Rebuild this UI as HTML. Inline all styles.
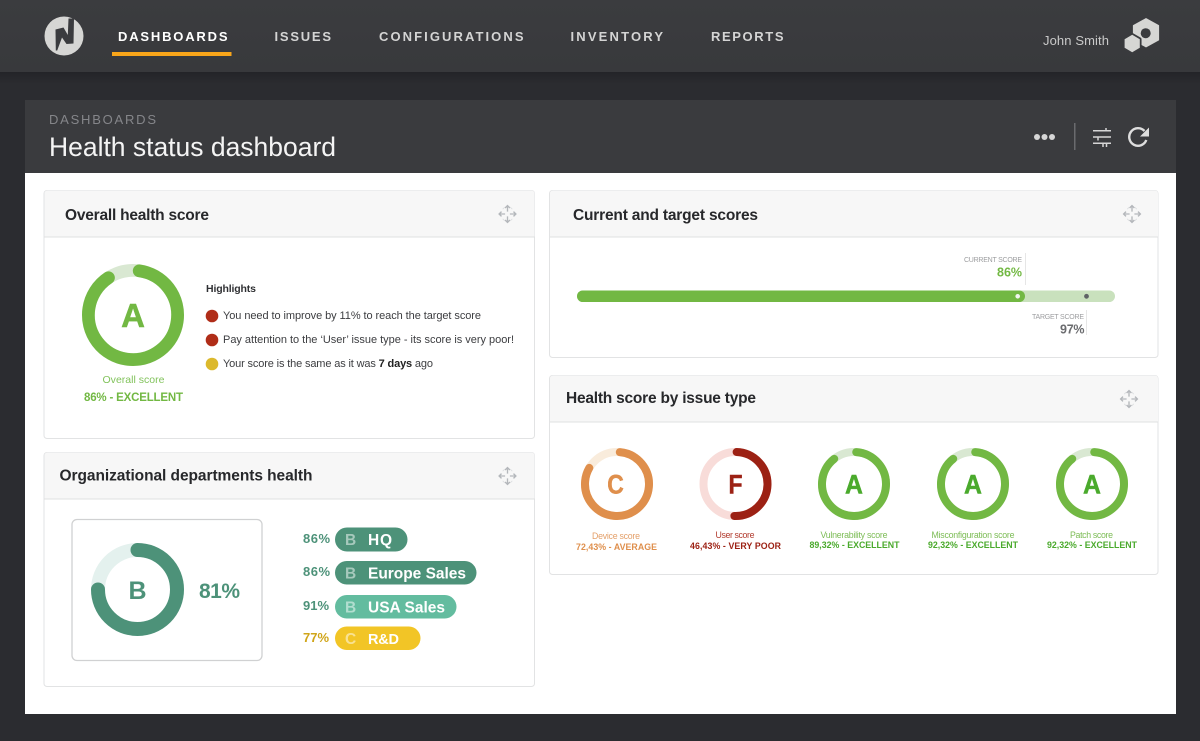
<!DOCTYPE html>
<html><head><meta charset="utf-8"><title>Health status dashboard</title>
<style>
html,body{margin:0;padding:0;background:#2b2c30;width:1200px;height:741px;overflow:hidden}
svg{display:block}
text{font-family:"Liberation Sans",sans-serif}
.nav{font-size:13px;font-weight:bold;fill:#d4d4d4}
.ct{font-size:15.5px;font-weight:bold;fill:#27282b}
.hl{font-size:11px;fill:#3c3d40}
.card{fill:#fff;stroke:#e2e3e4}
.chd{fill:#f7f7f7}
.pct{font-size:13px;font-weight:bold}
.pill{font-size:15.5px;font-weight:bold;fill:#fff}
.pl{font-size:15.5px;font-weight:bold;fill:#fff;fill-opacity:.5}
.sl{font-size:8.8px}
.sv{font-size:8.8px;font-weight:bold}
.big{font-size:27px;font-weight:bold;text-anchor:middle;stroke-width:.5px}
</style></head><body>
<svg width="1200" height="741" viewBox="0 0 1200 741" xmlns="http://www.w3.org/2000/svg">
<defs>
<linearGradient id="hg" x1="0" y1="0" x2="0" y2="1"><stop offset="0" stop-color="#3b3c3f"/><stop offset="1" stop-color="#38393c"/></linearGradient>
<linearGradient id="sh" x1="0" y1="0" x2="0" y2="1"><stop offset="0" stop-color="#232428"/><stop offset="1" stop-color="#2b2c30"/></linearGradient>
<g id="mv" fill="none" stroke="#b4b7bb" stroke-width="1.700" transform="scale(.8)">
<path d="M0-10V-3M-3-7.500L0-10.500L3-7.500M0 10V3M-3 7.500L0 10.500L3 7.500M-10 0H-3M-7.500-3L-10.500 0L-7.500 3M10 0H3M7.500-3L10.500 0L7.500 3"/>
<path d="M-6-6L-3.500-8.500M6-6L3.500-8.500M-6 6L-3.500 8.500M6 6L3.500 8.500" stroke-width="1" stroke="#dcdee0"/>
</g>
</defs>
<rect width="1200" height="741" fill="#2b2c30"/>
<rect y="72" width="1200" height="12" fill="url(#sh)"/>
<rect width="1200" height="72" fill="url(#hg)"/>

<circle cx="64" cy="36" r="19.500" fill="#d6d6d4"/>
<path d="M55.500 29.500L63.500 27.500L67.800 35L68.500 18.500L74 18.500L73.500 43.500L66.500 44L62 37.500L57.200 50.500L55.800 50.500Z" fill="#3a3b3e"/>

<text class="nav" x="118" y="41" textLength="109.500" style="fill:#fff">DASHBOARDS</text>
<rect x="112" y="52" width="119.500" height="4" fill="#f9a61a"/>
<text class="nav" x="274.500" y="41" textLength="56.500">ISSUES</text>
<text class="nav" x="379" y="41" textLength="144.500">CONFIGURATIONS</text>
<text class="nav" x="570.500" y="41" textLength="92.500">INVENTORY</text>
<text class="nav" x="711" y="41" textLength="72.500">REPORTS</text>
<text x="1043" y="45" font-size="13" fill="#c9c9c9" textLength="66">John Smith</text>

<path d="M1146 18.500L1158.700 25.500V40L1146 47L1133.300 40V25.500Z" fill="#d6d6d4" stroke="#d6d6d4" stroke-width=".8" stroke-linejoin="round"/>
<circle cx="1145.700" cy="33.200" r="5" fill="#3a3b3e"/>
<path d="M1132.200 34.800L1139.800 39.200V47.800L1132.200 52.200L1124.600 47.800V39.200Z" fill="#d6d6d4" stroke="#3a3b3e" stroke-width="3.500" stroke-linejoin="round" style="paint-order:stroke"/>

<rect x="25" y="100" width="1151" height="74" fill="#3a3b3e"/>
<rect x="25" y="173" width="1151" height="541" fill="#fff"/>
<text x="49" y="124" font-size="13" fill="#85868a" textLength="107">DASHBOARDS</text>
<text x="49" y="156" font-size="26.500" fill="#f4f4f4" textLength="287">Health status dashboard</text>
<circle cx="1037" cy="137" r="3" fill="#d6d6d6"/><circle cx="1044.500" cy="137" r="3" fill="#d6d6d6"/><circle cx="1052" cy="137" r="3" fill="#d6d6d6"/>
<rect x="1074" y="123" width="1.500" height="27" fill="#6a6b6e"/>
<path d="M1093 130.700H1111M1093 137H1111M1093 143.300H1111" stroke="#d6d6d6" stroke-width="1.500" fill="none"/>
<path d="M1106 128V131M1098 137V140.500M1103 143.300V147M1106.500 143.300V147" stroke="#d6d6d6" stroke-width="1.500" fill="none"/>
<path d="M1144.500 131A8.800 8.800 0 1 0 1146.300 140" stroke="#dedede" stroke-width="2.400" fill="none"/>
<path d="M1149 127.500V136.500H1140Z" fill="#dedede"/>

<!-- Overall -->
<rect class="card" x="44" y="190.500" width="490.500" height="248" rx="3"/>
<path class="chd" d="M44.500 237V193.500a3 3 0 0 1 3-3H531.500a3 3 0 0 1 3 3V237Z"/>
<path d="M44 237H535" stroke="#dfe0e1"/>
<text class="ct" x="65" y="220" textLength="144">Overall health score</text>
<use href="#mv" x="507.500" y="214"/>
<circle cx="133" cy="315" r="44.600" fill="none" stroke="#d9e8d2" stroke-width="12.800"/>
<circle cx="133" cy="315" r="44.600" fill="none" stroke="#72b843" stroke-width="12.800" stroke-linecap="round" pathLength="100" stroke-dasharray="88.500 100" transform="rotate(-82 133 315)"/>
<text x="133" y="327" font-size="33" font-weight="bold" fill="#72b843" stroke="#72b843" stroke-width=".5" text-anchor="middle">A</text>
<text x="133.500" y="383" font-size="10.500" fill="#82c35c" text-anchor="middle" textLength="62">Overall score</text>
<text x="133.500" y="401" font-size="11.500" font-weight="bold" fill="#72b843" text-anchor="middle" textLength="99">86% - EXCELLENT</text>
<text x="206" y="292" font-size="10.500" font-weight="bold" fill="#303134" textLength="50">Highlights</text>
<circle cx="212" cy="316" r="6.300" fill="#b02d18"/>
<circle cx="212" cy="340" r="6.300" fill="#b02d18"/>
<circle cx="212" cy="364" r="6.300" fill="#dcb92c"/>
<text class="hl" x="223" y="319" textLength="258">You need to improve by 11% to reach the target score</text>
<text class="hl" x="223" y="343" textLength="291">Pay attention to the ‘User’ issue type - its score is very poor!</text>
<text class="hl" x="223" y="367" textLength="210">Your score is the same as it was <tspan font-weight="bold" fill="#222">7 days</tspan> ago</text>

<!-- Org -->
<rect class="card" x="44" y="452.500" width="490.500" height="234" rx="3"/>
<path class="chd" d="M44.500 499V455.500a3 3 0 0 1 3-3H531.500a3 3 0 0 1 3 3V499Z"/>
<path d="M44 499H535" stroke="#dfe0e1"/>
<text class="ct" x="59.500" y="480.500" textLength="253">Organizational departments health</text>
<use href="#mv" x="507.500" y="476"/>
<rect x="72" y="519.500" width="190" height="141" rx="5" fill="#fff" stroke="#d0d1d2" stroke-width="1.300"/>
<circle cx="137.500" cy="589.500" r="39.500" fill="none" stroke="#e4f1ee" stroke-width="14"/>
<circle cx="137.500" cy="589.500" r="39.500" fill="none" stroke="#4d9279" stroke-width="14" stroke-linecap="round" pathLength="100" stroke-dasharray="75 100" transform="rotate(-90 137.500 589.500)"/>
<text x="137.500" y="599" font-size="25" font-weight="bold" fill="#4d9279" text-anchor="middle">B</text>
<text x="199" y="598" font-size="21" font-weight="bold" fill="#4d9279" textLength="41">81%</text>

<text class="pct" x="303" y="543" fill="#4d9279" textLength="27">86%</text>
<rect x="335" y="527.500" width="72.500" height="24" rx="12" fill="#4d9279"/>
<text class="pl" x="345" y="545">B</text><text class="pill" x="368" y="545" textLength="24">HQ</text>

<text class="pct" x="303" y="576" fill="#4d9279" textLength="27">86%</text>
<rect x="335" y="561" width="141.500" height="23.500" rx="11.750" fill="#4d9279"/>
<text class="pl" x="345" y="578.500">B</text><text class="pill" x="368" y="578.500" textLength="98">Europe Sales</text>

<text class="pct" x="303" y="610" fill="#4d9279" textLength="26">91%</text>
<rect x="335" y="595" width="121.500" height="23.500" rx="11.750" fill="#63bc9f"/>
<text class="pl" x="345" y="612.500">B</text><text class="pill" x="368" y="612.500" textLength="77">USA Sales</text>

<text class="pct" x="303" y="642" fill="#d0a519" textLength="26">77%</text>
<rect x="335" y="626.500" width="85.500" height="23.500" rx="11.750" fill="#f2c526"/>
<text class="pl" x="345" y="644">C</text><text class="pill" x="368" y="644" style="font-size:14.500px" textLength="31">R&amp;D</text>

<!-- Current/target -->
<rect class="card" x="549.500" y="190.500" width="608.500" height="167" rx="3"/>
<path class="chd" d="M550 237V193.500a3 3 0 0 1 3-3H1155a3 3 0 0 1 3 3V237Z"/>
<path d="M550 237H1158" stroke="#dfe0e1"/>
<text class="ct" x="573" y="220" textLength="185">Current and target scores</text>
<use href="#mv" x="1132" y="214"/>
<rect x="1025" y="253" width="1" height="32" fill="#e6e6e6"/>
<rect x="1086" y="310" width="1" height="25" fill="#e6e6e6"/>
<text x="964" y="262" font-size="7" fill="#9c9d9f" textLength="58">CURRENT SCORE</text>
<text x="997" y="276.500" font-size="12.500" font-weight="bold" fill="#72b843" textLength="25">86%</text>
<text x="1032" y="319" font-size="7" fill="#9c9d9f" textLength="52">TARGET SCORE</text>
<text x="1060" y="333.500" font-size="12.500" font-weight="bold" fill="#6a6b6e" textLength="24.500">97%</text>
<rect x="577" y="290.500" width="538" height="11.500" rx="5.750" fill="#c9e1bd"/>
<rect x="577" y="290.500" width="448" height="11.500" rx="5.750" fill="#72b843"/>
<circle cx="1017.700" cy="296.300" r="2.300" fill="#f1f5ee"/>
<circle cx="1086.500" cy="296.300" r="2.400" fill="#5f6366"/>

<!-- By issue type -->
<rect class="card" x="549.500" y="375.500" width="608.500" height="199" rx="3"/>
<path class="chd" d="M550 422V378.500a3 3 0 0 1 3-3H1155a3 3 0 0 1 3 3V422Z"/>
<path d="M550 422H1158" stroke="#dfe0e1"/>
<text class="ct" x="566" y="403" textLength="190">Health score by issue type</text>
<use href="#mv" x="1129" y="399"/>

<circle cx="617" cy="484" r="32" fill="none" stroke="#f9ecdc" stroke-width="8"/>
<circle cx="617" cy="484" r="32" fill="none" stroke="#df8f4c" stroke-width="8" stroke-linecap="round" pathLength="100" stroke-dasharray="82 100" transform="rotate(-85 617 484)"/>
<text class="big" transform="translate(615.500 493.500) scale(.85 1)" fill="#df8f4c" stroke="#df8f4c">C</text>
<text class="sl" x="616" y="539" fill="#e4a06a" text-anchor="middle" textLength="48">Device score</text>
<text class="sv" x="616.500" y="550" fill="#df8f4c" text-anchor="middle" textLength="81">72,43% - AVERAGE</text>

<circle cx="735.500" cy="484" r="32" fill="none" stroke="#f8dcd9" stroke-width="8"/>
<circle cx="735.500" cy="484" r="32" fill="none" stroke="#9c2114" stroke-width="8" stroke-linecap="round" pathLength="100" stroke-dasharray="50 100" transform="rotate(-88 735.500 484)"/>
<text class="big" transform="translate(735.500 493.500) scale(.85 1)" fill="#9c2114" stroke="#9c2114">F</text>
<text class="sl" x="735" y="538" fill="#b23b2e" text-anchor="middle" textLength="39">User score</text>
<text class="sv" x="735.500" y="549" fill="#9c2114" text-anchor="middle" textLength="91">46,43% - VERY POOR</text>

<circle cx="854" cy="484" r="32" fill="none" stroke="#d9e8d2" stroke-width="8"/>
<circle cx="854" cy="484" r="32" fill="none" stroke="#72b843" stroke-width="8" stroke-linecap="round" pathLength="100" stroke-dasharray="88.300 100" transform="rotate(-86 854 484)"/>
<text class="big" transform="translate(854 493.500) scale(.92 1)" fill="#4aaa2c" stroke="#4aaa2c">A</text>
<text class="sl" x="854" y="538" fill="#7cbc55" text-anchor="middle" textLength="67">Vulnerability score</text>
<text class="sv" x="854.500" y="548" fill="#4aaa2c" text-anchor="middle" textLength="90">89,32% - EXCELLENT</text>

<circle cx="973" cy="484" r="32" fill="none" stroke="#d9e8d2" stroke-width="8"/>
<circle cx="973" cy="484" r="32" fill="none" stroke="#72b843" stroke-width="8" stroke-linecap="round" pathLength="100" stroke-dasharray="88.300 100" transform="rotate(-86 973 484)"/>
<text class="big" transform="translate(973 493.500) scale(.92 1)" fill="#4aaa2c" stroke="#4aaa2c">A</text>
<text class="sl" x="973" y="538" fill="#7cbc55" text-anchor="middle" textLength="83">Misconfiguration score</text>
<text class="sv" x="973" y="548" fill="#4aaa2c" text-anchor="middle" textLength="90">92,32% - EXCELLENT</text>

<circle cx="1092" cy="484" r="32" fill="none" stroke="#d9e8d2" stroke-width="8"/>
<circle cx="1092" cy="484" r="32" fill="none" stroke="#72b843" stroke-width="8" stroke-linecap="round" pathLength="100" stroke-dasharray="88.300 100" transform="rotate(-86 1092 484)"/>
<text class="big" transform="translate(1092 493.500) scale(.92 1)" fill="#4aaa2c" stroke="#4aaa2c">A</text>
<text class="sl" x="1091.500" y="538" fill="#7cbc55" text-anchor="middle" textLength="43">Patch score</text>
<text class="sv" x="1092" y="548" fill="#4aaa2c" text-anchor="middle" textLength="90">92,32% - EXCELLENT</text>
</svg>
</body></html>
